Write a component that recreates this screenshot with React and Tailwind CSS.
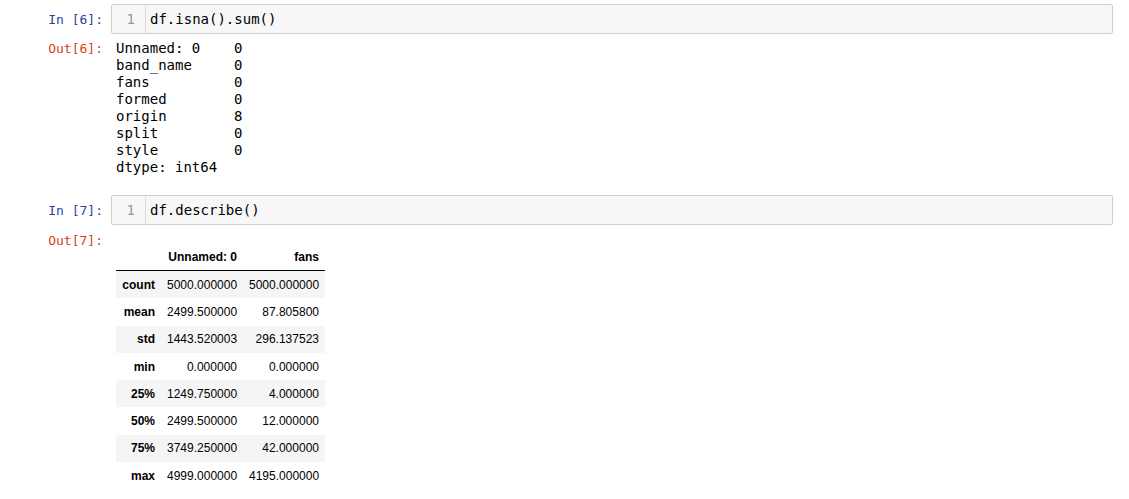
const mono = { fontFamily: '"DejaVu Sans Mono", "Liberation Mono", monospace' };

const seriesRows = [
  ['Unnamed: 0', '0'],
  ['band_name', '0'],
  ['fans', '0'],
  ['formed', '0'],
  ['origin', '8'],
  ['split', '0'],
  ['style', '0'],
];

const describeRows = [
  ['count', '5000.000000', '5000.000000'],
  ['mean', '2499.500000', '87.805800'],
  ['std', '1443.520003', '296.137523'],
  ['min', '0.000000', '0.000000'],
  ['25%', '1249.750000', '4.000000'],
  ['50%', '2499.500000', '12.000000'],
  ['75%', '3749.250000', '42.000000'],
  ['max', '4999.000000', '4195.000000'],
];

const InputCell = ({ n, code, className = '' }) => (
  <div className={`flex items-center ${className}`}>
    <div className="w-[111px] shrink-0 pr-2 text-right text-[13px] leading-[17px] text-[#303F9F]" style={mono}>
      In [{n}]:
    </div>
    <div className="flex h-[30px] flex-1 items-stretch rounded-[2px] border border-[#cfcfcf] bg-[#f7f7f7]">
      <div className="flex w-[34px] items-center justify-end border-r border-[#dddddd] pr-[10px] text-[14px] text-[#999999]" style={mono}>
        1
      </div>
      <div className="flex items-center pl-[4px] text-[14px] leading-[17px] text-black" style={mono}>
        {code}
      </div>
    </div>
  </div>
);

const OutPrompt = ({ n }) => (
  <div className="w-[111px] shrink-0 pr-2 text-right text-[13px] leading-[17px] text-[#D84315]" style={mono}>
    Out[{n}]:
  </div>
);

export default function App() {
  return (
    <div className="min-h-screen w-full bg-white pr-4 pt-1">
      <InputCell n={6} code="df.isna().sum()" />

      <div className="mt-[6px] flex">
        <OutPrompt n={6} />
        <div className="pl-[5px] text-[14px] leading-[17px] text-black" style={mono}>
          {seriesRows.map(([k, v]) => (
            <div key={k} className="flex whitespace-pre">
              <span className="w-[118px]">{k}</span>
              <span>{v}</span>
            </div>
          ))}
          <div className="whitespace-pre">dtype: int64</div>
        </div>
      </div>

      <InputCell n={7} code="df.describe()" className="mt-[19px]" />

      <div className="mt-[7px] flex">
        <OutPrompt n={7} />
        <div className="pl-[5px] pt-[12px] text-[12px] text-black" style={{ fontFamily: '"Liberation Sans", Arial, sans-serif' }}>
          <div className="flex h-[27px] items-center border-b border-black font-bold">
            <div className="w-[45px] px-1.5 text-right"></div>
            <div className="w-[82px] px-1.5 text-right">Unnamed: 0</div>
            <div className="w-[82px] px-1.5 text-right">fans</div>
          </div>
          {describeRows.map(([k, a, b], i) => (
            <div key={k} className={`flex h-[27.3px] items-center ${i % 2 === 0 ? 'bg-[#f5f5f5]' : 'bg-white'}`}>
              <div className="w-[45px] px-1.5 text-right font-bold">{k}</div>
              <div className="w-[82px] px-1.5 text-right">{a}</div>
              <div className="w-[82px] px-1.5 text-right">{b}</div>
            </div>
          ))}
        </div>
      </div>
    </div>
  );
}
